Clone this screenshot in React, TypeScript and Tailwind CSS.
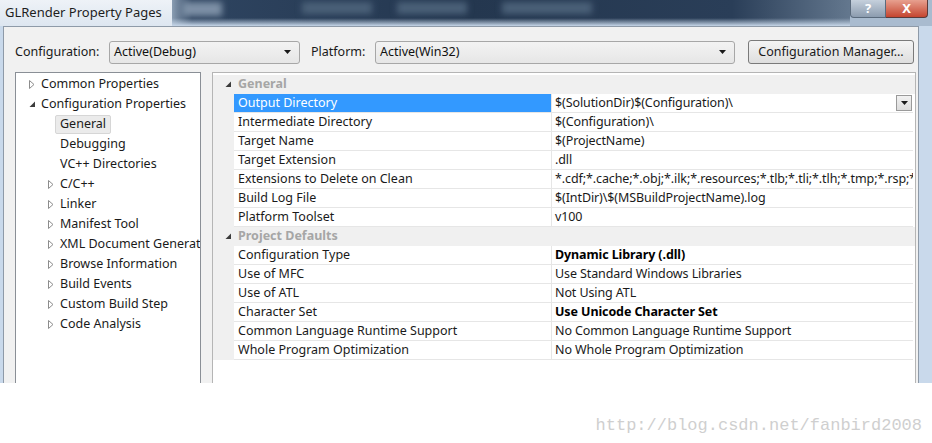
import React from "react";

type TreeItem = {
  label: string;
  level: 0 | 1;
  state?: "open" | "closed";
  selected?: boolean;
};

const tree: TreeItem[] = [
  { label: "Common Properties", level: 0, state: "closed" },
  { label: "Configuration Properties", level: 0, state: "open" },
  { label: "General", level: 1, selected: true },
  { label: "Debugging", level: 1 },
  { label: "VC++ Directories", level: 1 },
  { label: "C/C++", level: 1, state: "closed" },
  { label: "Linker", level: 1, state: "closed" },
  { label: "Manifest Tool", level: 1, state: "closed" },
  { label: "XML Document Generator", level: 1, state: "closed" },
  { label: "Browse Information", level: 1, state: "closed" },
  { label: "Build Events", level: 1, state: "closed" },
  { label: "Custom Build Step", level: 1, state: "closed" },
  { label: "Code Analysis", level: 1, state: "closed" },
];

type Row =
  | { kind: "cat"; label: string }
  | { kind: "prop"; name: string; value: string; bold?: boolean; selected?: boolean };

const rows: Row[] = [
  { kind: "cat", label: "General" },
  { kind: "prop", name: "Output Directory", value: "$(SolutionDir)$(Configuration)\\", selected: true },
  { kind: "prop", name: "Intermediate Directory", value: "$(Configuration)\\" },
  { kind: "prop", name: "Target Name", value: "$(ProjectName)" },
  { kind: "prop", name: "Target Extension", value: ".dll" },
  {
    kind: "prop",
    name: "Extensions to Delete on Clean",
    value: "*.cdf;*.cache;*.obj;*.ilk;*.resources;*.tlb;*.tli;*.tlh;*.tmp;*.rsp;*.pgc;*.pgd;*.meta;$(TargetPath)",
  },
  { kind: "prop", name: "Build Log File", value: "$(IntDir)\\$(MSBuildProjectName).log" },
  { kind: "prop", name: "Platform Toolset", value: "v100" },
  { kind: "cat", label: "Project Defaults" },
  { kind: "prop", name: "Configuration Type", value: "Dynamic Library (.dll)", bold: true },
  { kind: "prop", name: "Use of MFC", value: "Use Standard Windows Libraries" },
  { kind: "prop", name: "Use of ATL", value: "Not Using ATL" },
  { kind: "prop", name: "Character Set", value: "Use Unicode Character Set", bold: true },
  { kind: "prop", name: "Common Language Runtime Support", value: "No Common Language Runtime Support" },
  { kind: "prop", name: "Whole Program Optimization", value: "No Whole Program Optimization" },
];

function Closed() {
  return (
    <svg width="6" height="9" viewBox="0 0 6 9">
      <path d="M0.5 0.5 L5 4.5 L0.5 8.5 Z" fill="none" stroke="#8c8c8c" />
    </svg>
  );
}

function Open() {
  return (
    <svg width="7" height="7" viewBox="0 0 7 7">
      <path d="M6 0.5 L6 6 L0.5 6 Z" fill="#3c3c3c" />
    </svg>
  );
}

function DownArrow() {
  return (
    <svg width="7" height="4" viewBox="0 0 7 4">
      <path d="M0 0 L7 0 L3.5 4 Z" fill="#1a1a1a" />
    </svg>
  );
}

function Combo({ text, width }: { text: string; width: string }) {
  return (
    <div
      className={`${width} flex h-[23px] shrink-0 items-center justify-between rounded-[3px] border border-[#a7a7a7] bg-[linear-gradient(#f3f3f3,#e6e6e6)] pl-[4px] pr-[8px] text-[#111]`}
    >
      <span>{text}</span>
      <DownArrow />
    </div>
  );
}

export default function App() {
  return (
    <div className="relative h-[443px] w-[932px] overflow-hidden bg-white font-['Noto_Sans',sans-serif] text-[12.5px] text-[#1a1a1a]">
      {/* window */}
      <div className="flex h-[383px] flex-col overflow-hidden bg-[#c9d9eb]">
        {/* title bar */}
        <div className="flex h-[26px] shrink-0">
          <div className="flex w-[172px] items-start whitespace-nowrap bg-[linear-gradient(#eef2f7,#dde6f0)] pl-[5px] pt-[3px] text-[13px] text-[#1e1e1e]">
            GLRender Property Pages
          </div>
          <div className="relative flex-1 bg-[linear-gradient(90deg,#8a9db2_0px,#2e4460_20px,#24374f_300px,#2a3e58_560px,#6e8298_700px,#8fa2b7)]">
            <div className="absolute inset-x-0 bottom-0 h-[8px] bg-[linear-gradient(transparent,#c6d6e8)]" />
            <div className="absolute left-[10px] top-[2px] h-[14px] w-[40px] bg-[#7d90a6] blur-[3px]" />
            <div className="absolute left-[130px] top-[2px] h-[12px] w-[70px] bg-[#4a6078] blur-[3px]" />
            <div className="absolute left-[225px] top-[2px] h-[12px] w-[70px] bg-[#4a6078] blur-[3px]" />
            <div className="absolute left-[330px] top-[2px] h-[12px] w-[90px] bg-[#4a6078] blur-[3px]" />
          </div>
          <div className="flex items-start bg-[#a9bbcf] pr-[4px]">
            <div className="flex h-[18px] w-[36px] items-center justify-center rounded-bl-[4px] border border-t-0 border-[#5a6a7c] bg-[linear-gradient(#c5d0dc,#8c9caf)] text-[13px] font-bold text-white">
              ?
            </div>
            <div className="flex h-[18px] w-[42px] items-center justify-center rounded-br-[4px] border border-l-0 border-t-0 border-[#5a3a3a] bg-[linear-gradient(#e7a08f,#c5452f)] text-[13px] font-bold text-white">
              X
            </div>
          </div>
        </div>

        {/* client area */}
        <div className="ml-[3px] mr-[13px] flex flex-1 flex-col border-l border-t border-r border-[#8e9aa8] bg-[#f1f1f1] pl-[11px] pr-[3px]">
          <div className="flex h-[45px] items-center pt-[5px]">
            <span className="w-[94px] shrink-0 whitespace-nowrap">Configuration:</span>
            <Combo text="Active(Debug)" width="w-[191px]" />
            <span className="ml-[11px] w-[64px] shrink-0">Platform:</span>
            <Combo text="Active(Win32)" width="w-[360px]" />
            <div className="ml-[13px] flex h-[24px] w-[166px] shrink-0 items-center justify-center rounded-[3px] border border-[#7a7a7a] bg-[linear-gradient(#f4f4f4,#dedede)]">
              Configuration Manager...
            </div>
          </div>

          <div className="flex flex-1 gap-[11px]">
            {/* tree */}
            <div className="h-[360px] w-[186px] shrink-0 overflow-hidden border border-[#8a8f96] bg-white pt-[1px]">
              {tree.map((t) => (
                <div
                  key={t.label}
                  className={`flex h-[20px] items-center whitespace-nowrap ${t.level === 0 ? "pl-[12px]" : "pl-[31px]"}`}
                >
                  <span className="flex w-[13px] shrink-0 items-center pl-[1px]">
                    {t.state === "closed" && <Closed />}
                    {t.state === "open" && <Open />}
                  </span>
                  <span
                    className={
                      t.selected
                        ? "-ml-[5px] flex h-[19px] items-center rounded-[2px] border border-[#d6d6d6] bg-[#ebebeb] px-[4px]"
                        : ""
                    }
                  >
                    {t.label}
                  </span>
                </div>
              ))}
            </div>

            {/* property grid */}
            <div className="h-[360px] w-[704px] shrink-0 overflow-hidden border border-[#b5b5b5] bg-white pt-[2px]">
              {rows.map((r, i) =>
                r.kind === "cat" ? (
                  <div key={i} className="flex h-[19px] items-center bg-[#f0f0f0]">
                    <span className="flex w-[25px] shrink-0 justify-end pr-[6px]">
                      <Open />
                    </span>
                    <span className="font-bold text-[#a6a6a6]">{r.label}</span>
                  </div>
                ) : (
                  <div key={i} className="flex h-[19px] bg-[#f0f0f0]">
                    <span className="w-[21px] shrink-0" />
                    <div
                      className={`flex w-[318px] shrink-0 items-center border-b border-r border-[#e6e6e6] pl-[4px] ${
                        r.selected ? "bg-[#3399ff] text-white" : "bg-white"
                      }`}
                    >
                      {r.name}
                    </div>
                    <div
                      className={`flex w-[361px] shrink-0 items-center justify-between overflow-hidden whitespace-nowrap border-b border-[#e6e6e6] bg-white pl-[3px] ${
                        r.bold ? "font-bold text-black" : ""
                      }`}
                    >
                      <span className="tracking-[-0.1px]">{r.value}</span>
                      {r.selected && (
                        <span className="mr-[1px] flex h-[16px] w-[16px] shrink-0 items-center justify-center border border-[#9a9a9a] bg-[linear-gradient(#f2f2f2,#dcdcdc)]">
                          <DownArrow />
                        </span>
                      )}
                    </div>
                    <span className="w-[2px] shrink-0 bg-white" />
                  </div>
                )
              )}
            </div>
          </div>
        </div>
      </div>

      {/* watermark */}
      <div className="flex justify-end pr-[10px] pt-[30px] font-['Liberation_Mono',monospace] text-[17px] text-[#cfcfcf]">
        http://blog.csdn.net/fanbird2008
      </div>
    </div>
  );
}
